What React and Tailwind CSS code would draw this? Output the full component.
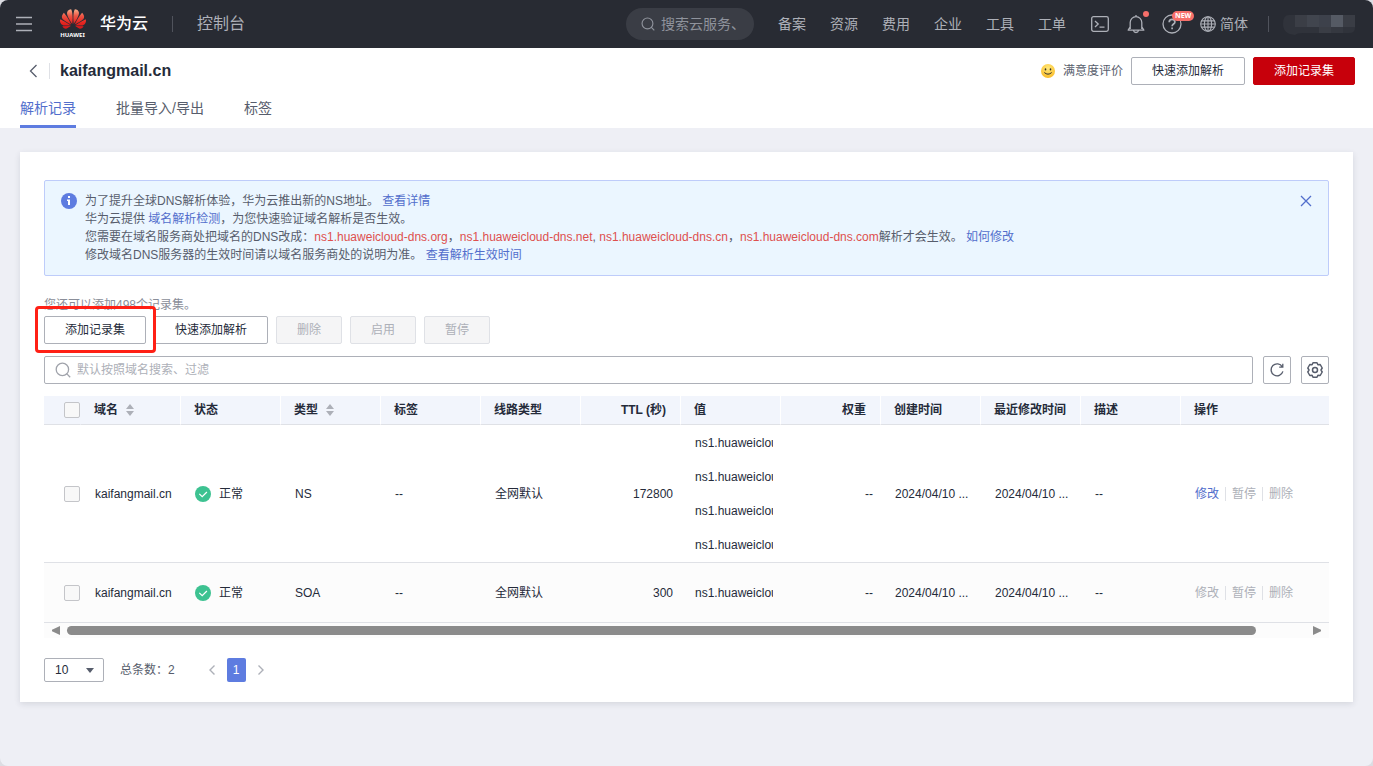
import { SiHuawei } from "react-icons/si";

const NAV = ["备案", "资源", "费用", "企业", "工具", "工单"];
const COLUMNS = [
  { label: "域名", sort: true },
  { label: "状态" },
  { label: "类型", sort: true },
  { label: "标签" },
  { label: "线路类型" },
  { label: "TTL (秒)", right: true },
  { label: "值" },
  { label: "权重", right: true },
  { label: "创建时间" },
  { label: "最近修改时间" },
  { label: "描述" },
];
const ROWS = [
  { type: "NS", ttl: "172800", values: 4, editable: true },
  { type: "SOA", ttl: "300", values: 1, editable: false },
];

function SearchIcon({ className }) {
  return (
    <svg className={className} viewBox="0 0 16 16" fill="none" stroke="currentColor" strokeWidth="1.3" aria-hidden="true">
      <circle cx="7.4" cy="7.4" r="6.2" />
      <path d="M11.6 11.6 15.2 15.2" />
    </svg>
  );
}

function Logo() {
  return (
    <a href="#home" className="flex items-center gap-3.5">
      <span className="flex w-7 flex-col items-center">
        <svg className="absolute size-0" aria-hidden="true">
          <defs>
            <linearGradient id="petal" x1="0" y1="0" x2="0" y2="1">
              <stop offset="0" stopColor="#f9b08c" />
              <stop offset="0.35" stopColor="#ec5343" />
              <stop offset="0.7" stopColor="#e6241f" />
              <stop offset="1" stopColor="#d3161a" />
            </linearGradient>
          </defs>
        </svg>
        <SiHuawei className="-mt-1 ml-px" size={26} fill="url(#petal)" aria-hidden="true" />
        <span className="-mt-px ml-px font-['Noto_Sans',sans-serif] text-[6px] leading-[8px] font-bold text-white">HUAWEI</span>
      </span>
      <span className="text-base leading-6 font-medium text-white">华为云</span>
    </a>
  );
}

function TopBar() {
  return (
    <header className="flex h-12 items-center bg-[#282b33] pr-[18px] pl-4 text-[#adb0b8]">
      <button type="button" aria-label="菜单">
        <svg className="h-4 w-4" viewBox="0 0 16 16" stroke="currentColor" strokeWidth="1.5" aria-hidden="true">
          <path d="M0 1.5h16M0 8h16M0 14.5h16" />
        </svg>
      </button>
      <div className="ml-[26px]">
        <Logo />
      </div>
      <span className="mx-6 h-4 w-px bg-[#50535c]" />
      <a href="#console" className="text-base leading-6">控制台</a>
      <div className="ml-auto flex items-center">
        <label className="flex h-8 w-32 items-center gap-1.5 rounded-full bg-[#3a3d45] pr-2 pl-[15px]">
          <SearchIcon className="h-3.5 w-3.5 shrink-0 text-[#8f939c]" />
          <input
            aria-label="搜索云服务"
            placeholder="搜索云服务、"
            className="w-full min-w-0 bg-transparent text-sm leading-5 outline-none placeholder:text-[#8f939c]"
          />
        </label>
        <nav className="ml-6 flex gap-6 text-sm leading-5">
          {NAV.map((n) => (
            <a key={n} href="#nav">{n}</a>
          ))}
        </nav>
        <button type="button" aria-label="命令行" className="ml-6">
          <svg className="h-5 w-5" viewBox="0 0 20 20" fill="none" stroke="currentColor" strokeWidth="1.3" aria-hidden="true">
            <rect x="1.7" y="2.7" width="16.6" height="14.6" rx="1.8" />
            <path d="m5 7 3.2 3L5 13M9.5 13.2h5" />
          </svg>
        </button>
        <button type="button" aria-label="通知" className="relative ml-4">
          <svg className="h-5 w-5" viewBox="0 0 20 20" fill="none" stroke="currentColor" strokeWidth="1.3" strokeLinejoin="round" aria-hidden="true">
            <path d="M10 1v1.600M4.200 15V8.500a5.800 5.800 0 0 1 11.600 0V15M4.200 12.800 2.200 16.200h15.600L15.800 12.800M7.400 16.400q.6 2.100 2.600 2.100t2.600-2.100" />
          </svg>
          <span className="absolute -top-[3px] -right-[3px] h-1.5 w-1.5 rounded-full bg-[#f66f6a]" />
        </button>
        <button type="button" aria-label="帮助" className="relative ml-4">
          <svg className="h-5 w-5" viewBox="0 0 20 20" fill="none" stroke="currentColor" strokeWidth="1.3" aria-hidden="true">
            <circle cx="10" cy="10" r="9" />
            <path strokeWidth="1.7" d="M7.200 8.200c0-1.800 1.200-2.900 2.900-2.900s2.800 1 2.800 2.600c0 2.100-2.800 2.100-2.800 4.300M10.100 13.400v1.800" />
          </svg>
          <span className="absolute -top-[3px] left-2.5 rounded-full bg-[#f66f6a] px-[3px] font-['Open_Sans',sans-serif] text-[7px] leading-[10px] font-bold text-white">NEW</span>
        </button>
        <button type="button" className="ml-[18px] flex items-center gap-1 text-sm leading-5">
          <svg className="h-4 w-4" viewBox="0 0 16 16" fill="none" stroke="currentColor" strokeWidth="1.1" aria-hidden="true">
            <circle cx="8" cy="8" r="7.300" />
            <ellipse cx="8" cy="8" rx="3.600" ry="7.300" />
            <path d="M8 .7v14.600M1.500 4.900h13M.7 8h14.600M1.500 11.100h13" />
          </svg>
          简体
        </button>
        <span className="mr-3.5 ml-5 h-4 w-px bg-[#50535c]" />
        <svg className="h-6 w-[72px]" viewBox="0 0 72 24" aria-hidden="true">
          <clipPath id="user">
            <path d="M6 3h66v13q0 5-6 5H20q-6 0-8 2Q0 22 0 12 0 3 6 3Z" />
          </clipPath>
          <g clipPath="url(#user)">
            <rect width="72" height="24" fill="#30333b" />
            <path fill="#3b3e46" d="M12 3h12v12H12z" />
            <path fill="#41454e" d="M24 3h12v12H24z" />
            <path fill="#3d414b" d="M36 3h12v12H36z" />
            <path fill="#555a64" d="M48 3h12v12H48z" />
            <path fill="#3a3d45" d="M60 3h12v12H60zM36 15h12v9H36z" />
            <path fill="#353840" d="M48 15h12v9H48z" />
          </g>
        </svg>
      </div>
    </header>
  );
}

function Smiley() {
  return (
    <svg className="h-3.5 w-3.5" viewBox="0 0 14 14" aria-hidden="true">
      <defs>
        <radialGradient id="face" cx="0.5" cy="0.3" r="0.8">
          <stop offset="0" stopColor="#ffe87a" />
          <stop offset="1" stopColor="#f9b51c" />
        </radialGradient>
      </defs>
      <circle cx="7" cy="7" r="7" fill="url(#face)" />
      <ellipse cx="4.500" cy="5.400" rx="0.8" ry="1.100" fill="#33302a" />
      <ellipse cx="9.500" cy="5.400" rx="0.8" ry="1.100" fill="#33302a" />
      <path d="M3.600 8.800q3.400 3 6.800 0" fill="none" stroke="#33302a" strokeLinecap="round" />
    </svg>
  );
}

function Button({ children, disabled, primary }) {
  const tone = primary
    ? "border-[#c7000b] bg-[#c7000b] text-white"
    : disabled
      ? "border-[#dfe1e6] bg-[#f5f5f6] text-[#adb0b8]"
      : "border-[#adb0b8] bg-white text-[#252b3a]";
  return (
    <button type="button" disabled={disabled} className={`h-7 rounded-xs border px-5 text-xs leading-[18px] whitespace-nowrap ${tone}`}>
      {children}
    </button>
  );
}

function PageHeader() {
  return (
    <div className="bg-white">
      <div className="flex items-center justify-between pt-[9px] pr-[18px] pl-7">
        <div className="flex items-center">
          <a href="#back" aria-label="返回">
            <svg className="h-4 w-3" viewBox="0 0 12 16" fill="none" stroke="#575d6c" strokeWidth="1.300" aria-hidden="true">
              <path d="M8.500 2 2.500 8l6 6" />
            </svg>
          </a>
          <span className="mr-2.5 ml-[9px] h-4 w-px bg-[#dfe1e6]" />
          <h1 className="text-base leading-6 font-bold text-[#252b3a]">kaifangmail.cn</h1>
        </div>
        <div className="flex items-center gap-2">
          <a href="#feedback" className="flex items-center gap-2 text-xs leading-[18px] text-[#575d6c]">
            <Smiley />
            满意度评价
          </a>
          <Button>快速添加解析</Button>
          <Button primary>添加记录集</Button>
        </div>
      </div>
      <nav className="flex gap-10 px-5 pt-3 text-sm leading-[22px] text-[#575d6c]">
        <a href="#records" className="border-b-[3px] border-[#5e7ce0] pb-1.5 text-[#526ecc]">解析记录</a>
        <a href="#batch">批量导入/导出</a>
        <a href="#tags">标签</a>
      </nav>
    </div>
  );
}

function Link({ children }) {
  return <a href="#doc" className="text-[#526ecc]">{children}</a>;
}

function Ns({ children }) {
  return <span className="text-[#de504e]">{children}</span>;
}

function Notice() {
  return (
    <section className="flex items-start rounded-xs border border-[#beccfa] bg-[#ebf6ff] px-4 py-[11px] text-xs leading-[18px] text-[#575d6c]">
      <svg className="mt-px mr-2 h-4 w-4 shrink-0" viewBox="0 0 16 16" aria-hidden="true">
        <circle cx="8" cy="8" r="8" fill="#5e7ce0" />
        <path d="M7 3h2v2H7zM6 6.500h3V12H7V8H6z" fill="#fff" />
      </svg>
      <div className="min-w-0 flex-1">
        <p>为了提升全球DNS解析体验，华为云推出新的NS地址。 <Link>查看详情</Link></p>
        <p>华为云提供 <Link>域名解析检测</Link>，为您快速验证域名解析是否生效。</p>
        <p>
          您需要在域名服务商处把域名的DNS改成：<Ns>ns1.huaweicloud-dns.org</Ns>，<Ns>ns1.huaweicloud-dns.net</Ns>, <Ns>ns1.huaweicloud-dns.cn</Ns>，<Ns>ns1.huaweicloud-dns.com</Ns>解析才会生效。 <Link>如何修改</Link>
        </p>
        <p>修改域名DNS服务器的生效时间请以域名服务商处的说明为准。 <Link>查看解析生效时间</Link></p>
      </div>
      <button type="button" aria-label="关闭" className="mt-0.5">
        <svg className="h-3.5 w-3.5" viewBox="0 0 14 14" stroke="#526ecc" strokeWidth="1.300" aria-hidden="true">
          <path d="m3 2 10 10M13 2 3 12" />
        </svg>
      </button>
    </section>
  );
}

function Toolbar() {
  return (
    <div className="flex gap-2">
      <div className="relative">
        <Button>添加记录集</Button>
        <span className="pointer-events-none absolute -top-2.5 -right-2.5 -bottom-[9px] -left-[9px] rounded-sm border-[3px] border-[#ff2015]" />
      </div>
      <Button>快速添加解析</Button>
      <Button disabled>删除</Button>
      <Button disabled>启用</Button>
      <Button disabled>暂停</Button>
    </div>
  );
}

function FilterBar() {
  return (
    <div className="mt-3 flex gap-2.5">
      <label className="flex h-7 flex-1 items-center gap-1.5 rounded-xs border border-[#adb0b8] px-2.5">
        <SearchIcon className="h-4 w-4 shrink-0 text-[#a0a3ab]" />
        <input
          aria-label="搜索记录集"
          placeholder="默认按照域名搜索、过滤"
          className="w-full text-xs leading-[18px] outline-none placeholder:text-[#adb0b8]"
        />
      </label>
      <button type="button" aria-label="刷新" className="flex size-7 items-center justify-center rounded-xs border border-[#adb0b8]">
        <svg className="h-4 w-4" viewBox="0 0 16 16" fill="none" stroke="#575d6c" strokeWidth="1.300" aria-hidden="true">
          <path d="M13.300 4.800a6 6 0 1 0 .6 4.600M13.800 1.800v3.400h-3.600" />
        </svg>
      </button>
      <button type="button" aria-label="设置" className="flex size-7 items-center justify-center rounded-xs border border-[#adb0b8]">
        <svg className="h-[18px] w-[18px]" viewBox="0 0 18 18" fill="none" stroke="#575d6c" strokeWidth="1.500" strokeLinejoin="round" aria-hidden="true">
          <path d="M7 1.700h4l.9 2 2.300-.2 2 3.500L15 9l1.200 2-2 3.500-2.300-.2-.9 2H7l-.9-2-2.300.2-2-3.500L3 9 1.800 7l2-3.500 2.300.2z" />
          <circle cx="9" cy="9" r="2.500" />
        </svg>
      </button>
    </div>
  );
}

function Check({ label }) {
  return (
    <input type="checkbox" aria-label={label} className="block size-4 appearance-none rounded-xs border border-[#c4c5c9] bg-[#f8f8f8]" />
  );
}

function SortIcon() {
  return (
    <svg className="h-3 w-2" viewBox="0 0 8 12" fill="#adb0b8" aria-hidden="true">
      <path d="M4 0 8 5H0zM4 12 0 7h8z" />
    </svg>
  );
}

function Actions({ editable }) {
  return (
    <div className="flex items-center gap-1.5 text-[#adb0b8]">
      <button type="button" disabled={!editable} className={editable ? "text-[#526ecc]" : "text-[#adb0b8]"}>修改</button>
      <span className="h-3.5 w-px bg-[#dfe1e6]" />
      <button type="button" disabled>暂停</button>
      <span className="h-3.5 w-px bg-[#dfe1e6]" />
      <button type="button" disabled>删除</button>
    </div>
  );
}

function RecordTable() {
  return (
    <div className="mt-3">
      <table className="w-full table-fixed border-separate border-spacing-0 text-left text-xs leading-[18px] text-[#252b3a]">
        <thead className="bg-[#f2f5fc]">
          <tr className="h-[29px]">
            <th className="w-9 border-b border-[#dfe1e6] p-0 pl-5"><Check label="全选" /></th>
            {COLUMNS.map((c, i) => (
              <th
                key={c.label}
                className={`w-[100px] border-b border-l border-b-[#dfe1e6] p-0 pr-3.5 pl-[13px] font-bold whitespace-nowrap ${i === 0 ? "border-l-transparent" : "border-l-white"} ${c.right ? "text-right" : ""}`}
              >
                {c.sort ? (
                  <button type="button" className="flex items-center gap-2">
                    {c.label}
                    <SortIcon />
                  </button>
                ) : (
                  c.label
                )}
              </th>
            ))}
            <th className="border-b border-l border-b-[#dfe1e6] border-l-white p-0 pl-[13px] font-bold">操作</th>
          </tr>
        </thead>
        <tbody className="[&_td]:border-b [&_td]:border-[#dfe1e6] [&_td]:py-0 [&_td]:pr-[7px] [&_td]:pl-[15px] [&_td]:whitespace-nowrap">
          {ROWS.map((r) => (
            <tr key={r.type} className={r.values > 1 ? "h-[138px]" : "h-[60px] bg-[#fcfcfc]"}>
              <td className="pr-0! pl-5!"><Check label={`选择 ${r.type} 记录`} /></td>
              <td>kaifangmail.cn</td>
              <td>
                <span className="flex items-center gap-2">
                  <svg className="h-4 w-4" viewBox="0 0 16 16" fill="none" aria-hidden="true">
                    <circle cx="8" cy="8" r="8" fill="#3dc291" />
                    <path d="m4.300 7.800 2.900 2.900L11.900 6" stroke="#fff" strokeWidth="1.200" />
                  </svg>
                  正常
                </span>
              </td>
              <td>{r.type}</td>
              <td>--</td>
              <td>全网默认</td>
              <td className="text-right">{r.ttl}</td>
              <td>
                <div className="flex flex-col gap-4">
                  {Array.from({ length: r.values }, (_, i) => (
                    <div key={i} className="overflow-hidden">ns1.huaweiclou</div>
                  ))}
                </div>
              </td>
              <td className="text-right">--</td>
              <td>2024/04/10 ...</td>
              <td>2024/04/10 ...</td>
              <td>--</td>
              <td><Actions editable={r.editable} /></td>
            </tr>
          ))}
        </tbody>
      </table>
      <div className="flex h-[15px] items-center gap-[7px] bg-[#fcfcfc] px-2">
        <svg className="h-[9px] w-2" viewBox="0 0 8 9" fill="#8b8b8b" aria-hidden="true"><path d="M8 0v9L0 5.200V3.800z" /></svg>
        <div className="flex-1">
          <div className="h-[9px] w-[96%] rounded-full bg-[#8b8b8b]" />
        </div>
        <svg className="h-[9px] w-2" viewBox="0 0 8 9" fill="#8b8b8b" aria-hidden="true"><path d="M0 0v9l8-3.800V3.800z" /></svg>
      </div>
    </div>
  );
}

function Pager() {
  return (
    <div className="mt-5 flex items-center text-xs leading-[18px] text-[#575d6c]">
      <div className="relative">
        <select aria-label="每页条数" defaultValue="10" className="block h-6 w-[60px] appearance-none rounded-xs border border-[#adb0b8] bg-white pl-2.5 text-[#252b3a]">
          <option>10</option>
          <option>20</option>
          <option>50</option>
        </select>
        <svg className="pointer-events-none absolute top-2.5 right-2.5 h-[5px] w-2" viewBox="0 0 8 5" fill="#575d6c" aria-hidden="true">
          <path d="M0 0h8L4 5z" />
        </svg>
      </div>
      <span className="ml-4">总条数：2</span>
      <div className="ml-8 flex items-center gap-2.5">
        <button type="button" aria-label="上一页">
          <svg className="h-3 w-2.5" viewBox="0 0 10 12" fill="none" stroke="#adb0b8" strokeWidth="1.400" aria-hidden="true"><path d="M7.500 1.500 3 6l4.500 4.500" /></svg>
        </button>
        <button type="button" className="h-6 w-[19px] rounded-xs bg-[#5e7ce0] text-white">1</button>
        <button type="button" aria-label="下一页">
          <svg className="h-3 w-2.5" viewBox="0 0 10 12" fill="none" stroke="#adb0b8" strokeWidth="1.400" aria-hidden="true"><path d="M2.500 1.500 7 6l-4.500 4.500" /></svg>
        </button>
      </div>
    </div>
  );
}

export default function App() {
  return (
    <div className="bg-[#dcdde3]">
      <div className="min-h-screen overflow-hidden rounded-lg bg-[#eeeff5] font-['Liberation_Sans','Noto_Sans_CJK_SC',sans-serif]">
        <TopBar />
        <PageHeader />
        <main className="m-5 mt-6 bg-white px-6 pt-7 pb-5 shadow-[0_2px_6px_rgba(37,43,58,0.12)]">
          <Notice />
          <p className="mt-5 mb-0.5 text-xs leading-[18px] text-[#8a8e99]">您还可以添加498个记录集。</p>
          <Toolbar />
          <FilterBar />
          <RecordTable />
          <Pager />
        </main>
      </div>
    </div>
  );
}
